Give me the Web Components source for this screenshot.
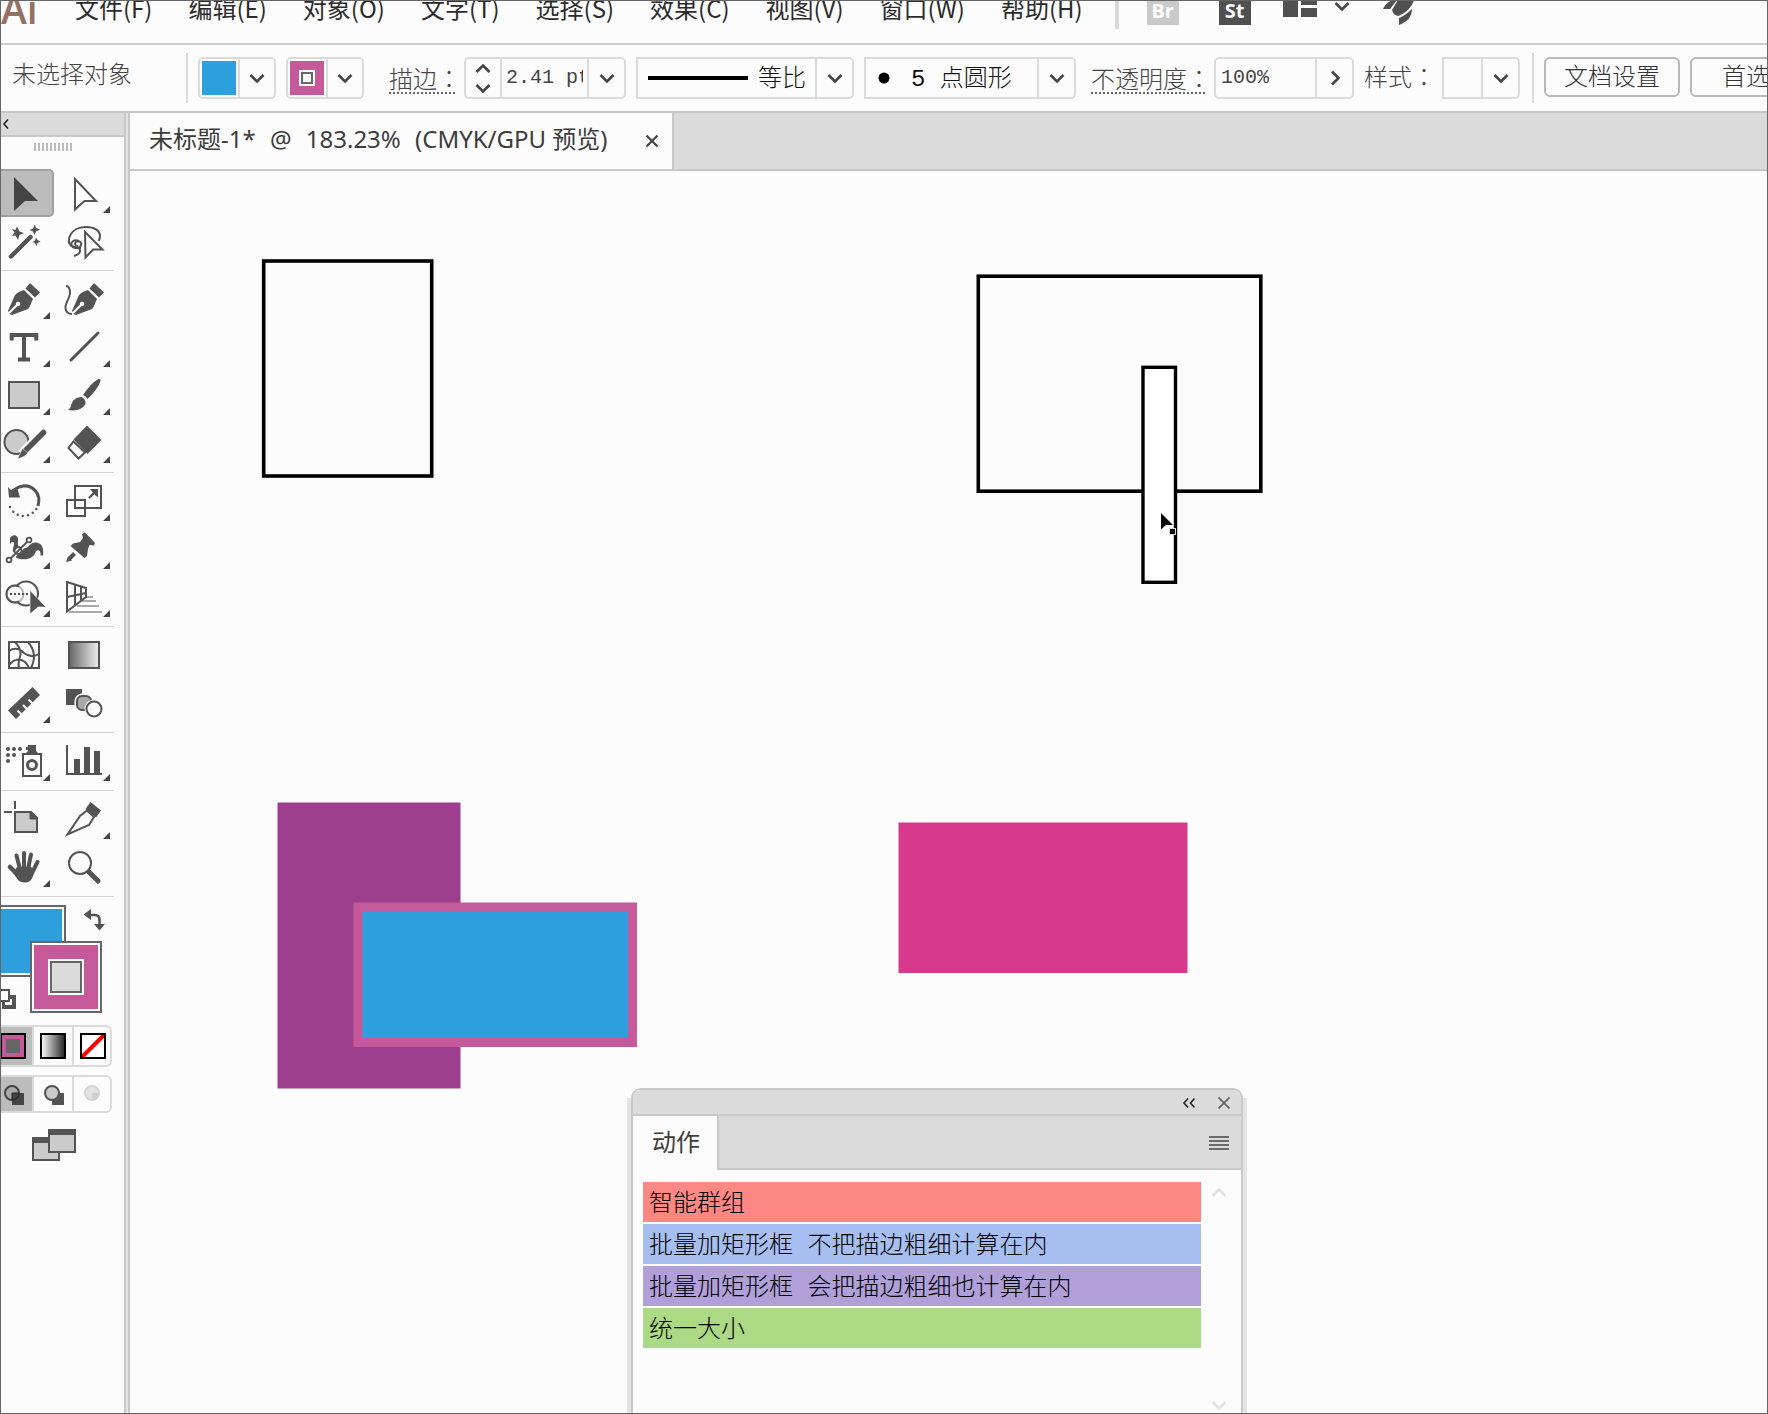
<!DOCTYPE html>
<html lang="zh-CN">
<head>
<meta charset="utf-8">
<title>未标题-1</title>
<style>
html, body { margin: 0; height: 100%; overflow: hidden; background: #fcfcfc; }
body { font-family: "Liberation Mono", "Noto Sans CJK SC", monospace; font-size: 24px; color: #444; }
</style>
</head>
<body>
<ai-app></ai-app>
<script>
const UI = '"Noto Sans", "Noto Sans CJK SC", sans-serif';
const RESET = `
  *, *::before, *::after { box-sizing: border-box; }
  button, input, select { font: inherit; color: inherit; background: none; border: 0; margin: 0; padding: 0; border-radius: 0; outline: 0; appearance: none; }
  svg { display: block; flex: none; }
`;
function define(name, html, css, setup) {
  const tpl = document.createElement('template');
  customElements.define(name, class extends HTMLElement {
    constructor() {
      super();
      tpl.innerHTML = `<style>${RESET}${css}</style>${html}`;
      this.attachShadow({ mode: 'open' }).append(tpl.content.cloneNode(true));
    }
    connectedCallback() { if (setup) setup(this, this.shadowRoot); }
  });
}

/* chevron glyph: down by default, dir = up | right */
define('ui-chevron',
  `<svg width="16" height="16" viewBox="0 0 16 16"><path d="M1.5 5 8 11.5 14.5 5" fill="none" stroke="currentColor" stroke-width="2.6"/></svg>`,
  `:host { display: block; flex: none; pointer-events: none; }
   :host([dir=up]) svg { transform: rotate(180deg); }
   :host([dir=right]) svg { transform: rotate(-90deg); }`);

/* bordered field; the parts passed in are split by hairlines */
define('ui-field', `<slot></slot>`,
  `:host { display: flex; flex: none; height: 42px; border: 2px solid #dbdbdb; border-radius: 5px; align-items: stretch; background: #fcfcfc; }
   :host([square]) { border-radius: 0 5px 5px 0; }`);

/* ---------- menu bar ---------- */
define('menu-bar', `
  <span class="logo">Ai</span>
  <nav>
    <button>文件(F)</button><button>编辑(E)</button><button>对象(O)</button><button>文字(T)</button><button>选择(S)</button><button>效果(C)</button><button>视图(V)</button><button>窗口(W)</button><button>帮助(H)</button>
  </nav>
  <i class="sep"></i>
  <button class="app br">Br</button>
  <button class="app st">St</button>
  <button class="layout" aria-label="排列文档"><svg width="34" height="17"><path d="M0 0H15V17H0ZM18 0H34V5H18ZM18 8H34V17H18Z" fill="#505050"/></svg>
  <ui-chevron></ui-chevron></button>
  <button class="rocket" aria-label="GPU 性能"><svg width="32" height="26" viewBox="0 0 32 26"><g fill="#505050"><path d="M0 9C3 3 7 0 13 0H14L7 9Z"/><path d="M15 0H31C29 7 23 13 15 16C11 15 10 13 9 10Z"/><path d="M29 9C29 17 24 22 16 25V18C21 16 25 13 29 9Z"/></g></svg></button>
`, `
  :host { display: flex; height: 45px; border-bottom: 2px solid #cbcbcb; align-items: flex-start; overflow: hidden; font-family: "Noto Sans CJK SC", sans-serif; color: #2b2b2b; }
  .logo { width: 57px; padding-left: 1px; font: 600 39px/22px "Open Sans", sans-serif; margin-top: -2px; color: #947261; flex: none; }
  nav { display: flex; flex: none; }
  nav button { padding: 0 18px; line-height: 32px; height: 32px; margin-top: -8px; white-space: nowrap; }
  .sep { width: 4px; height: 29px; background: #d9d9d9; margin: 0 28px 0 14px; flex: none; }
  .app { width: 32px; height: 25px; font: 700 20px/18px "Noto Sans", sans-serif; color: #fcfcfc; flex: none; padding-bottom: 4px; }
  .br { background: #c9c9c9; margin-right: 40px; }
  .st { background: #505050; margin-right: 32px; }
  .layout { display: flex; gap: 17px; margin-right: 33px; align-items: flex-start; color: #444; }
  .layout ui-chevron { margin-top: -2px; }
  .rocket { align-self: flex-start; }
`);

/* ---------- control bar ---------- */
define('swatch-picker', `
  <ui-field><span class="chip"><i></i></span><button aria-label="颜色"><ui-chevron></ui-chevron></button></ui-field>
`, `
  :host { display: block; flex: none; }
  .chip { width: 38px; padding: 2px; display: flex; }
  .chip i { flex: 1; background: #2d9fdd; }
  :host([stroke]) .chip i { background: linear-gradient(#fcfcfc,#fcfcfc) center/8px 8px no-repeat, linear-gradient(#666,#666) center/12px 12px no-repeat, linear-gradient(#fcfcfc,#fcfcfc) center/16px 16px no-repeat, #c6599a; }
  button { width: 36px; border-left: 2px solid #dbdbdb; display: grid; place-items: center; color: #444; }
`);

define('control-bar', `
  <span class="status">未选择对象</span>
  <i class="sep"></i>
  <swatch-picker></swatch-picker>
  <swatch-picker stroke></swatch-picker>
  <label class="dotted" for="weight">描边<span lang="zh-TW">：</span></label>
  <ui-field class="weight">
    <span class="steps"><button aria-label="增加"><ui-chevron dir="up"></ui-chevron></button><button aria-label="减少"><ui-chevron></ui-chevron></button></span>
    <input id="weight" value="2.41 pt">
    <button class="drop" aria-label="粗细"><ui-chevron></ui-chevron></button>
  </ui-field>
  <ui-field class="profile" square>
    <svg width="100" height="4"><rect width="100" height="4"/></svg>
    <select aria-label="宽度配置文件"><option>等比</option></select>
    <span class="drop"><ui-chevron></ui-chevron></span>
  </ui-field>
  <ui-field class="brush" square>
    <svg width="12" height="12"><circle cx="6" cy="6" r="5.5"/></svg>
    <select aria-label="画笔定义"><option>5 点圆形</option></select>
    <span class="drop"><ui-chevron></ui-chevron></span>
  </ui-field>
  <label class="dotted opacity" for="opacity">不透明度<span lang="zh-TW">：</span></label>
  <ui-field class="alpha">
    <input id="opacity" value="100%">
    <button class="drop" aria-label="不透明度滑块"><ui-chevron dir="right"></ui-chevron></button>
  </ui-field>
  <label class="style" for="gstyle">样式<span lang="zh-TW">：</span></label>
  <ui-field class="gs" square>
    <select id="gstyle"><option></option></select>
    <span class="drop"><ui-chevron></ui-chevron></span>
  </ui-field>
  <i class="sep two"></i>
  <button class="push">文档设置</button>
  <button class="push">首选项</button>
`, `
  :host { display: flex; height: 68px; border-bottom: 2px solid #c8c8c8; align-items: center; overflow: hidden; white-space: nowrap; font-weight: 300; line-height: 32px; }
  .status { width: 173px; padding-left: 12px; flex: none; margin-bottom: 2px; }
  .sep { width: 2px; height: 50px; background: #dbdbdb; flex: none; margin: 0 10px 0 13px; }
  .sep.two { margin: 0 10px 0 12px; }
  swatch-picker { margin-right: 10px; }
  label { flex: none; }
  label span { font-family: "Noto Sans CJK TC", sans-serif; }
  .dotted { width: 66px; margin: 0 9px 0 15px; height: 32px; background: repeating-linear-gradient(90deg, #666 0 2px, transparent 2px 4px) 0 100%/100% 2px no-repeat; }
  .dotted.opacity { width: 114px; margin: 0 9px 0 15px; }
  .drop, .steps button { display: grid; place-items: center; color: #444; }
  .drop { width: 37px; border-left: 2px solid #dbdbdb; flex: none; }
  .steps { width: 36px; border-right: 2px solid #dbdbdb; display: grid; grid-template-rows: 1fr 1fr; }
  input { font-size: 20px; padding: 0 4px; min-width: 0; flex: 1; }
  select { flex: 1; min-width: 0; color: #111; line-height: 34px; padding-top: 4px; }
  .weight { width: 162px; margin-right: 10px; }
  .profile { width: 218px; margin-right: 10px; }
  .profile svg { align-self: center; margin: 0 10px; }
  .brush { width: 212px; }
  .brush svg { align-self: center; margin: 0 21px 0 12px; }
  .alpha { width: 140px; margin-right: 10px; }
  .alpha input { padding: 0 5px; }
  .style { width: 78px; }
  .gs { width: 78px; }
  .push { height: 40px; border: 2px solid #b9b9b9; border-radius: 6px; padding: 4px 18px 0; width: 136px; margin: 0 10px 2px 0; flex: none; color: #333; line-height: 32px; }
`);

/* ---------- tools ---------- */
const PEN = `<g fill="#535353"><path d="M30 8 40 17.5 35 22.5 25.5 13.5Z"/><path d="M24 15 33 24C31 28 30 32 28 34L12 40 9.5 39 17.5 31A2.2 2.2 0 1 0 16 29.5L8.5 37 8 36 15 20C18 17 21 16 24 15Z"/></g>`;
const S = 'fill="none" stroke="#535353" stroke-width="2"';
const ICONS = {
  select: `<path d="M14 8 38 32H25L14 42Z" fill="#444"/>`,
  direct: `<path d="M15 10 36 32H24.500L15 40.500Z" ${S}/>`,
  wand: `<path d="M11 39.500 30.500 20" stroke="#535353" stroke-width="4.400" stroke-linecap="round"/><g fill="#535353"><path d="M17 9.500 19.500 14.500 24 16 19.500 18 18 23 15.500 18.500 12 19 14.500 15.500 12 12 15.500 13Z"/><path d="M35 7.500 36 11 40 12.500 36 14.500 34.500 18 33 14.500 29.500 13 33 11.500Z"/><path d="M36 20.500 37.500 23 40.500 24.500 37.500 26 36.500 29 35 26 32.500 25 35 23.500Z"/></g>`,
  lasso: `<path d="M21 31C11 31 8 27 9 22C11 13 19 10 26 10C35 10 40 14 40 19Q40 22 38.500 24" ${S}/><path d="M19 24C14 22 10 25 12 29C14 32 20 32 21 28C22 25 18 23 16 25C14 27 16 30 18 29M19 31C22 35 18 38 14 39" ${S}/><path d="M25 15 42.500 32.500H33L25.500 40.500Z" fill="#fcfcfc" stroke="#535353" stroke-width="2"/>`,
  pen: PEN,
  curve: `<g transform="translate(4)">${PEN}</g><path d="M6 11C9 11 10 14 10 18C10 23 5 28 5.500 33Q6 39 12 39" ${S}/>`,
  type: `<path d="M10 12H38M11.700 10V17.500M36.300 10V17.500M24 12V37M18 36.500H30" fill="none" stroke="#535353" stroke-width="4"/>`,
  line: `<path d="M11 37 38 10" stroke="#535353" stroke-width="3" stroke-linecap="round"/>`,
  rect: `<rect x="9" y="11" width="30" height="26" fill="#cbcbcb" stroke="#535353" stroke-width="2"/>`,
  brush: `<g fill="#535353"><path d="M38.500 8Q41 7.500 40.500 10Q38 18 27.500 28Q26 25 23 24Q31 12 38.500 8Z"/><path d="M21.500 26Q26 28 25.500 33Q21 41 8 39Q11 37 11.500 33Q14 26 21.500 26Z"/></g>`,
  shaper: `<circle cx="16.500" cy="23" r="12" fill="#ccc" stroke="#535353" stroke-width="2"/><path d="M43 14 22 35" stroke="#fcfcfc" stroke-width="10"/><path d="M43.500 13.500 26 31" stroke="#535353" stroke-width="5.600" stroke-linecap="round"/><path d="M22.500 29.500 28 34 24 37.500 17.500 40Z" fill="#535353" stroke="#fcfcfc" stroke-width=".5"/>`,
  eraser: `<path d="M27 6.500 41.500 21 27.500 35 13.500 20.500Z" fill="#535353"/><path d="M13.500 22.500 25 33.500 18.500 39.500 8.500 29Z" fill="#fcfcfc" stroke="#535353" stroke-width="2"/>`,
  rotate: `<path d="M38 29C42 15 31 8 23 9Q17 10 13 14" fill="none" stroke="#535353" stroke-width="3"/><path d="M8 10 11 13 17 10 20 20.500H9Z" fill="#535353"/><g fill="#535353"><circle cx="10" cy="30" r="1.200"/><circle cx="13.300" cy="34.700" r="1.200"/><circle cx="17.700" cy="37.700" r="1.200"/><circle cx="22.700" cy="39" r="1.200"/><circle cx="28" cy="38.300" r="1.200"/><circle cx="32.700" cy="35.700" r="1.200"/><circle cx="36.300" cy="32" r="1.200"/></g>`,
  scale: `<path d="M15 9H41V31H15ZM7 23H25V39H7Z" ${S}/><path d="M29 21 35 15" stroke="#535353" stroke-width="2.400"/><path d="M30 12H38V20L35.500 18.500 31.500 14Z" fill="#535353"/>`,
  warp: `<path d="M10 13C13 8 19 10 18 16C17 22 20 24 26 23C30 21 31 17 36 17.500C42 18 44 23 43 30.500H40.500C41 26 39 24 36 26C34 33 28 35 20 34C12 33 12 25 14 20Q14 14 10 19Z" fill="#535353"/><path d="M9 35 29 15" stroke="#fcfcfc" stroke-width="5"/><path d="M9 35 29 15" stroke="#535353" stroke-width="1.800"/><g fill="#fcfcfc" stroke="#535353" stroke-width="1.800"><circle cx="9" cy="35" r="2.400"/><circle cx="29" cy="15" r="2.400"/><circle cx="18" cy="25.500" r="3.500" fill="none"/></g>`,
  pin: `<path d="M22 9 25 7.500 35 18 34 20.500 29.500 20 28 24 27 31 24.500 33 10.500 21 13 18.500 20 17 23 13Z" fill="#535353"/><path d="M14.500 28.500 9 34" stroke="#535353" stroke-width="4"/><path d="M6 37 8 31.500 12 35.500Z" fill="#535353"/>`,
  builder: `<circle cx="26" cy="20.500" r="12" ${S}/><circle cx="15" cy="21" r="8.500" fill="#fcfcfc" stroke="#b5b5b5" stroke-width="2"/><path d="M19 13.500A8.500 8.500 0 1 0 19 28.500" ${S}/><path d="M10 21H30" stroke="#535353" stroke-width="2" stroke-dasharray="2 2"/><path d="M30 17.500 46 34H38L30 41Z" fill="#535353" stroke="#fcfcfc" stroke-width=".6"/>`,
  perspective: `<g stroke="#a9a9a9" stroke-width="2"><path d="M26 24H33M22 28H36M17 33H39M9 39H42"/></g><path d="M7 9 26 15V24L7 38.500ZM15 12V32M21 14V28M7 24 26 20" ${S}/>`,
  mesh: `<rect x="9" y="11" width="30" height="26" ${S}/><path d="M9 20C15 16 20 18 24 22C29 26 34 26 39 23M9 34C14 28 20 27 25 31Q28 34 29 37M15 11C21 17 22 23 19 29Q18 34 19 37M28 11C34 18 36 27 31 37" ${S}/>`,
  gradient: `<defs><linearGradient id="g"><stop stop-color="#666"/><stop offset="1" stop-color="#f0f0f0"/></linearGradient></defs><rect x="9" y="11" width="30" height="26" fill="url(#g)" stroke="#535353" stroke-width="2"/>`,
  ruler: `<path d="M32.500 8 40 16 16 40 8 31.500Z" fill="#535353"/><path d="M15.500 29.500 19.500 33.500M21 24 25 28M26.500 18.500 30.500 22.500" transform="translate(2 2)" stroke="#fcfcfc" stroke-width="2"/>`,
  blend: `<rect x="6" y="10" width="16" height="16" fill="#535353"/><rect x="17" y="17" width="14" height="14" rx="5" fill="#a9a9a9" stroke="#fcfcfc" stroke-width="5"/><rect x="17" y="17" width="14" height="14" rx="5" fill="#a9a9a9" stroke="#535353" stroke-width="2"/><circle cx="34" cy="30" r="9.500" fill="#fcfcfc"/><circle cx="34" cy="30" r="7.500" ${S}/>`,
  spray: `<g fill="#535353"><circle cx="8" cy="12" r="2"/><circle cx="14" cy="12" r="2"/><circle cx="20" cy="12" r="2"/><circle cx="8" cy="18" r="2"/><circle cx="14" cy="18" r="2"/><circle cx="8" cy="24" r="2"/><path d="M28 8H36V14L38 16H26L28 14V13H26V10H28Z"/></g><rect x="23" y="17" width="18" height="22" ${S}/><circle cx="32" cy="28" r="4.500" fill="none" stroke="#535353" stroke-width="3"/>`,
  chart: `<path d="M7 8V37H42" ${S}/><path d="M14 22H20V36H14ZM24 10H30V36H24ZM34 14H40V36H34Z" fill="#535353"/>`,
  artboard: `<path d="M15 6V14M4 17H12" ${S}/><path d="M15 17H31L37 23V37H15Z" fill="#cbcbcb" stroke="#535353" stroke-width="2"/><path d="M30 17V24H37Z" fill="#535353" stroke="#535353"/>`,
  slice: `<path d="M30.500 7 41 15.500 36 22.500 25.500 14Z" fill="#535353"/><path d="M27 15.500 34 22 29 30 7.500 39.500 20 21Z" ${S}/>`,
  hand: `<g fill="none" stroke="#535353" stroke-linecap="round"><path d="M16.500 12.500 20 26M24 10V26M31 11.500 28 26M37.500 19 32 30" stroke-width="4"/><path d="M10 24 18 32" stroke-width="4.500"/></g><path d="M17 24H31L34 27Q34 34 30 38Q25 41 19 38L13 30Z" fill="#535353"/>`,
  zoom: `<circle cx="20" cy="20" r="11" ${S}/><path d="M29 29 38 38" stroke="#535353" stroke-width="5" stroke-linecap="round"/>`,
};

define('tool-button', `<button></button>`, `
  :host { display: block; width: 54px; height: 48px; }
  button { display: block; width: 54px; height: 48px; }
  :host([active]) button { background: #bcbcbc; border: 2px solid #a0a0a0; border-left: 0; border-radius: 0 5px 5px 0; }
  :host([active]) svg { margin-top: -2px; }
`, (host, root) => {
  const more = host.hasAttribute('more') ? '<path d="M50 37V44H43Z" fill="#444"/>' : '';
  const b = root.querySelector('button');
  b.setAttribute('aria-label', host.getAttribute('label'));
  b.innerHTML = `<svg width="54" height="48" viewBox="0 0 54 48">${ICONS[host.getAttribute('icon')]}${more}</svg>`;
});

const GROUPS = [
  [['select', '选择'], ['direct', '直接选择', 1], ['wand', '魔棒'], ['lasso', '套索']],
  [['pen', '钢笔', 1], ['curve', '曲率'], ['type', '文字', 1], ['line', '直线段', 1], ['rect', '矩形', 1], ['brush', '画笔', 1], ['shaper', '整形器', 1], ['eraser', '橡皮擦', 1]],
  [['rotate', '旋转', 1], ['scale', '比例缩放', 1], ['warp', '宽度', 1], ['pin', '操控变形', 1], ['builder', '形状生成器', 1], ['perspective', '透视网格', 1]],
  [['mesh', '网格'], ['gradient', '渐变'], ['ruler', '度量', 1], ['blend', '混合']],
  [['spray', '符号喷枪', 1], ['chart', '柱形图', 1]],
  [['artboard', '画板'], ['slice', '切片', 1], ['hand', '抓手', 1], ['zoom', '缩放']],
];

define('tool-panel', `
  <header><button aria-label="折叠"><svg width="8" height="12"><path d="M6 1.500 2 6 6 10.500" fill="none" stroke="#222" stroke-width="1.600"/></svg></button></header>
  <i class="grip"></i>
  ${GROUPS.map((g, n) => `<section>${g.map(([icon, label, more], i) => `<tool-button icon="${icon}" label="${label}" ${more ? 'more' : ''} ${n + i === 0 ? 'active' : ''}></tool-button>`).join('')}</section>`).join('')}
  <svg class="colors" width="114" height="128" viewBox="0 0 114 128">
    <g stroke="#666" stroke-width="2">
      <rect x="-5" y="9" width="70" height="70" fill="#fcfcfc"/><rect x="-2" y="12" width="64" height="64" fill="#2d9fdd" stroke="none"/>
      <rect x="31" y="45" width="70" height="70" fill="#fcfcfc"/><rect x="34" y="48" width="64" height="64" fill="#c6599a" stroke="none"/>
      <rect x="48" y="62" width="36" height="36" fill="#fcfcfc" stroke="none"/><rect x="51" y="65" width="30" height="30" fill="#dbdbdb"/>
    </g>
    <path d="M90 18H95Q99.500 18 99.500 23V28" fill="none" stroke="#535353" stroke-width="2.600"/><path d="M83.500 17.500 91 12V23ZM94 27H105L99.500 33.500Z" fill="#535353"/>
    <path d="M2 98H16V112H2Z" fill="#535353"/><path d="M5 102H12V108H5Z" fill="#fcfcfc"/><path d="M-2 93H9V104H-2Z" fill="#fcfcfc" stroke="#535353" stroke-width="2"/>
  </svg>
  <div class="modes">
    <button class="on" aria-label="颜色"><svg width="32" height="38"><rect x="1" y="7" width="24" height="24" fill="#c6599a" stroke="#000" stroke-width="2"/><rect x="6" y="12" width="14" height="14" fill="#666"/></svg></button>
    <button aria-label="渐变"><svg width="38" height="38"><defs><linearGradient id="m"><stop stop-color="#fff"/><stop offset="1" stop-color="#222"/></linearGradient></defs><rect x="7" y="7" width="24" height="24" fill="url(#m)" stroke="#000" stroke-width="2"/></svg></button>
    <button aria-label="无"><svg width="38" height="38"><rect x="7" y="7" width="24" height="24" fill="#fff"/><path d="M8 30 30 8" stroke="#f00" stroke-width="4"/><rect x="7" y="7" width="24" height="24" fill="none" stroke="#000" stroke-width="2"/></svg></button>
  </div>
  <div class="modes draw">
    <button class="on" aria-label="正常绘图"><svg width="32" height="34"><circle cx="12" cy="16" r="7" fill="#aaa" stroke="#444" stroke-width="2"/><path d="M12 16H24V28H12Z" fill="#444"/><path d="M12 16V23A7 7 0 0 0 19 16Z" fill="#444" stroke="#222"/></svg></button>
    <button aria-label="背面绘图"><svg width="38" height="34"><path d="M18 16H30V28H18Z" fill="#535353"/><circle cx="18" cy="16" r="7" fill="#cbcbcb" stroke="#535353" stroke-width="2"/></svg></button>
    <button aria-label="内部绘图" disabled><svg width="38" height="34"><circle cx="18" cy="16" r="7" fill="#e3e3e3" stroke="#d3d3d3" stroke-width="2"/><path d="M18 16H25A7 7 0 0 1 18 23Z" fill="#d0d0d0"/></svg></button>
  </div>
  <button class="screen" aria-label="更改屏幕模式"><svg width="44" height="32"><rect x="1" y="9" width="26" height="22" fill="#cbcbcb" stroke="#535353" stroke-width="2"/><path d="M0 8H28V14H0ZM16 0H44V24H16Z" fill="#535353"/><path d="M18 6H42V22H18Z" fill="#cbcbcb"/></svg></button>
`, `
  :host { display: flex; flex-direction: column; width: 126px; flex: none; border-right: 2px solid #c8c8c8; overflow: hidden; }
  header { height: 24px; background: #dbdbdb; border-bottom: 2px solid #c8c8c8; flex: none; }
  header button { padding: 5px 0 0 2px; display: block; }
  .grip { width: 38px; height: 8px; margin: 6px 0 18px 34px; flex: none; background: repeating-linear-gradient(90deg, #bbb 0 2px, transparent 2px 4px); }
  section { display: grid; grid-template-columns: 54px 54px; column-gap: 6px; width: 114px; padding-bottom: 5px; border-bottom: 1px solid #d3d3d3; margin-bottom: 4px; }
  section:last-of-type { margin-bottom: 0; }
  .modes { display: flex; width: 112px; height: 42px; border: 2px solid #dbdbdb; border-left: 0; border-radius: 0 6px 6px 0; flex: none; }
  .modes button { width: 40px; border-left: 2px solid #dbdbdb; overflow: hidden; }
  .modes button.on { width: 32px; border: 0; background: #bcbcbc; }
  .modes button:last-child { width: 38px; }
  .draw { height: 38px; margin-top: 8px; }
  .screen { margin: 16px 0 0 32px; align-self: flex-start; }
`);

/* ---------- document ---------- */
define('doc-tabs', `
  <div class="tab"><div><span>未标题-1*</span> <span>@</span> <span>183.23%</span> <span>(CMYK/GPU 预览)</span></div>
  <button aria-label="关闭"><svg width="14" height="14"><path d="M1.500 1.500 12.500 12.500M12.500 1.500 1.500 12.500" stroke="#444" stroke-width="2.200"/></svg></button></div>
`, `
  :host { display: flex; height: 58px; background: #dbdbdb; border-bottom: 2px solid #c8c8c8; font-family: ${UI}; color: #3c3c3c; flex: none; }
  .tab { display: flex; align-items: center; justify-content: space-between; width: 544px; padding: 0 13px 0 19px; background: #fcfcfc; border-right: 2px solid #c8c8c8; white-space: nowrap; }
  .tab div { line-height: 32px; margin-bottom: 4px; }
  .tab span + span { margin-left: 8px; }
`);

define('art-canvas', `
  <svg width="100%" height="100%">
    <rect x="133.700" y="90" width="168" height="215" fill="none" stroke="#000" stroke-width="3.600"/>
    <rect x="848.300" y="105.200" width="282.500" height="215" fill="none" stroke="#000" stroke-width="3.600"/>
    <rect x="1013" y="196.300" width="32.500" height="215" fill="#fff" stroke="#000" stroke-width="3.400"/>
    <path d="M1031 342 1043 354H1036L1031 358.500Z"/><rect x="1039.500" y="357.500" width="6" height="6" stroke="#ddd"/>
    <rect x="147.500" y="631.500" width="183" height="286" fill="#9d3e8f"/>
    <rect x="228" y="736" width="274.500" height="135.500" fill="#2d9fdd" stroke="#c6599a" stroke-width="9"/>
    <rect x="768.500" y="651.500" width="289" height="150.500" fill="#d73a8c"/>
  </svg>
  <slot></slot>
`, `
  :host { display: block; position: relative; flex: 1; min-height: 0; overflow: hidden; }
`);

/* ---------- actions panel ---------- */
define('action-row', `<button><slot></slot></button>`, `
  :host { display: block; background: var(--tint); }
  button { display: block; width: 100%; height: 40px; padding: 6px 6px 0; text-align: left; line-height: 34px; color: #000; white-space: nowrap; }
`);

define('actions-panel', `
  <header>
    <button aria-label="折叠"><svg width="14" height="12"><path d="M6 1.500 2 6 6 10.500M12.500 1.500 8.500 6 12.500 10.500" fill="none" stroke="#222" stroke-width="1.600"/></svg></button>
    <button aria-label="关闭"><svg width="12" height="12"><path d="M.500 .500 11.500 11.500M11.500 .500 .500 11.500" stroke="#666" stroke-width="1.800"/></svg></button>
  </header>
  <div class="tabs"><span>动作</span><button aria-label="面板菜单"><svg width="20" height="14"><path d="M0 1H20M0 5H20M0 9H20M0 13H20" stroke="#6a6a6a" stroke-width="2"/></svg></button></div>
  <div class="body">
    <div class="list"><slot></slot></div>
    <div class="scroll"><ui-chevron dir="up"></ui-chevron><ui-chevron></ui-chevron></div>
  </div>
`, `
  :host { display: flex; flex-direction: column; width: 612px; background: #fcfcfc; border: 2px solid #c8c8c8; border-bottom: 0; border-radius: 10px 10px 0 0; }
  :host::before { content: ""; position: absolute; inset: 8px -6px 0; border: 4px solid #e3e3e3; border-width: 0 4px; pointer-events: none; }
  header { height: 26px; background: #dbdbdb; border-bottom: 2px solid #c8c8c8; border-radius: 8px 8px 0 0; display: flex; justify-content: flex-end; align-items: center; gap: 22px; padding: 2px 11px 0 0; }
  .tabs { height: 54px; display: flex; align-items: stretch; justify-content: space-between; background: linear-gradient(#c8c8c8, #c8c8c8) 0 100%/100% 2px no-repeat #dbdbdb; padding-right: 12px; }
  .tabs span { background: #fcfcfc; border-right: 2px solid #c8c8c8; width: 86px; padding-left: 19px; line-height: 52px; font-family: ${UI}; color: #3c3c3c; }
  .body { flex: 1; display: flex; padding: 12px 14px 0 10px; justify-content: space-between; min-height: 0; }
  .list { display: flex; flex-direction: column; gap: 2px; width: 558px; font-weight: 300; }
  .scroll { display: flex; flex-direction: column; justify-content: space-between; color: #e0e0e0; padding: 3px 0 1px; }
`);

define('ai-app', `
  <menu-bar></menu-bar>
  <control-bar></control-bar>
  <main>
    <tool-panel></tool-panel>
    <div class="doc">
      <doc-tabs></doc-tabs>
      <art-canvas>
        <actions-panel>
          <action-row style="--tint:#fc8783">智能群组</action-row>
          <action-row style="--tint:#a7bff0">批量加矩形框 不把描边粗细计算在内</action-row>
          <action-row style="--tint:#b09fd9">批量加矩形框 会把描边粗细也计算在内</action-row>
          <action-row style="--tint:#acd983">统一大小</action-row>
        </actions-panel>
      </art-canvas>
    </div>
  </main>
`, `
  :host { display: flex; flex-direction: column; height: 100vh; background: #fcfcfc; }
  :host::after { content: ""; position: fixed; inset: 0; border: 1px solid #666; pointer-events: none; }
  main { flex: 1; display: flex; min-height: 0; }
  .doc { flex: 1; min-width: 0; display: flex; flex-direction: column; border-left: 2px solid #c8c8c8; margin-left: 2px; box-shadow: -2px 0 #e3e3e3; }
  actions-panel { position: absolute; left: 501px; top: 917px; bottom: 0; }
`);
</script>
</body>
</html>
